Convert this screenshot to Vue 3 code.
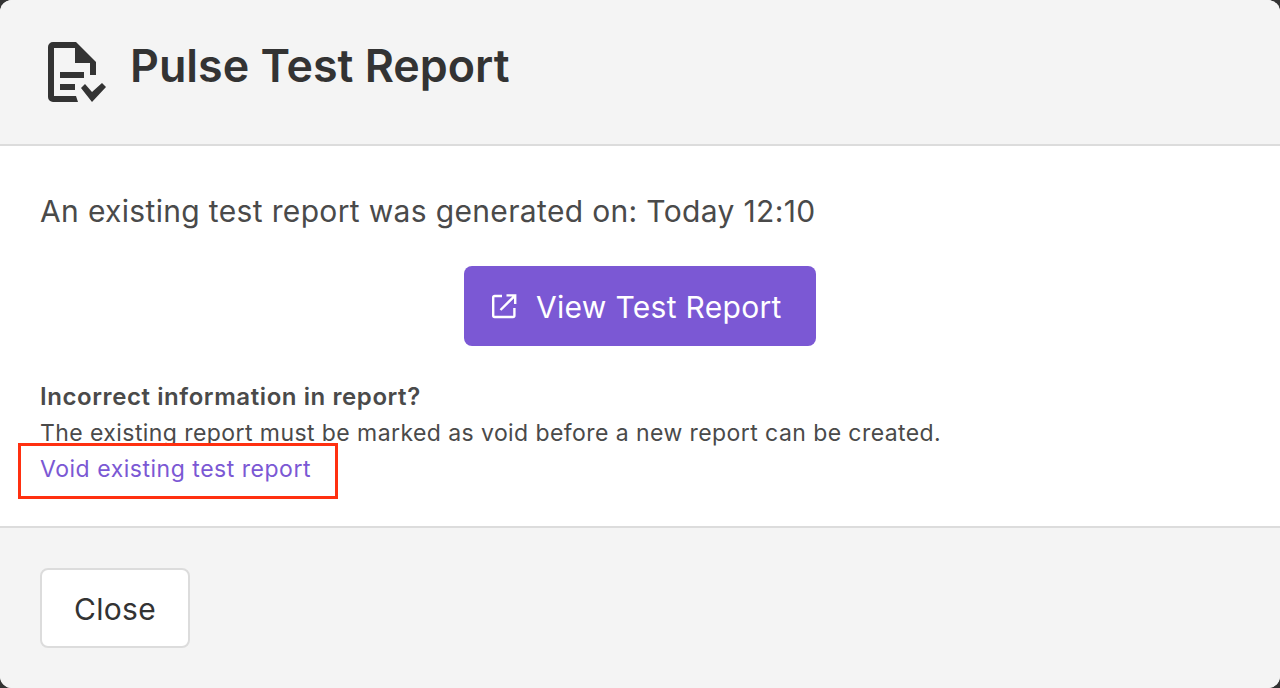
<template>
  <div class="modal">
    <header class="head">
      <svg class="report-icon" width="58" height="60" viewBox="48 42 58 60">
        <path fill="#333" d="M53 42H76L96 62V75H90V63H75V48H54V96H76L78 102H53a5 5 0 0 1-5-5V47a5 5 0 0 1 5-5Z" />
        <path fill="#333" d="M60 72H84V78H60ZM60 84H75V90H60Z" />
        <path fill="#333" d="M81 88L85 84L92 92L102 83L106 87L92 102Z" />
      </svg>
      <h1 class="title">Pulse Test Report</h1>
    </header>
    <main class="body">
      <p class="existing">An existing test report was generated on: Today 12:10</p>
      <div class="action">
        <button class="primary">
          <svg width="26" height="26" viewBox="0 0 26 26" fill="none" stroke="#fff" stroke-width="2.4">
            <path d="M11 3H3.6A1.4 1.4 0 0 0 2.2 4.4V22.6A1.4 1.4 0 0 0 3.6 24H22A1.4 1.4 0 0 0 23.4 22.6V15" />
            <path d="M15.5 2.4H24.2V11M24 2.6L9.5 17" />
          </svg>
          <span class="primary-label">View Test Report</span>
        </button>
      </div>
      <div class="info">
        <strong>Incorrect information in report?</strong>
        <div>The existing report must be marked as void before a new report can be created.</div>
        <div class="void-row">
          <a class="void-link">Void existing test report</a>
          <span class="highlight"></span>
        </div>
      </div>
    </main>
    <footer class="foot">
      <button class="close">Close</button>
    </footer>
  </div>
</template>

<script setup>
</script>

<style>
html, body { margin: 0; background: #333; }
</style>

<style scoped>
.modal {
  width: 1280px; height: 688px; box-sizing: border-box; overflow: hidden;
  display: flex; flex-direction: column;
  border-radius: 12px; background: #fff; color: #4a4a4a;
  font-family: Inter, "Liberation Sans", sans-serif;
}
.head {
  height: 146px; box-sizing: border-box; flex: none;
  display: flex; align-items: flex-start; gap: 24px;
  padding: 42px 0 0 48px;
  background: #f4f4f4; border-bottom: 2px solid #dcdcdc;
}
.report-icon { display: block; flex: none; }
.title {
  margin: -1px 0 0; font-size: 44.8px; line-height: 50px; font-weight: 600; color: #333;
}
.body { flex: 1; padding: 46px 40px 0 40px; }
.existing { margin: 0; font-size: 30px; line-height: 38px; letter-spacing: .34px; color: #4a4a4a; }
.action { display: flex; justify-content: center; margin-top: 36px; }
.primary {
  width: 352px; height: 80px; display: flex; align-items: center; gap: 19px;
  padding: 0 0 0 27px;
  border: 0; border-radius: 8px; background: #7b58d4; color: #fff;
  font: 400 30px Inter, "Liberation Sans", sans-serif; letter-spacing: .3px;
}
.primary-label { padding-top: 2px; }
.info { margin-top: 33px; font-size: 23px; line-height: 36px; letter-spacing: .425px; }
.info strong { font-weight: 600; display: block; font-size: 24px; letter-spacing: .58px; }
.void-row { position: relative; }
.void-link { color: #7b58d4; letter-spacing: .52px; }
.highlight {
  position: absolute; left: -22px; top: -8px; width: 320px; height: 56px;
  box-sizing: border-box; border: 3.5px solid #ff3010;
}
.foot {
  height: 162px; box-sizing: border-box; flex: none;
  padding: 40px 0 0 40px;
  background: #f4f4f4; border-top: 2px solid #dcdcdc;
}
.close {
  width: 150px; height: 80px; display: block; padding: 2px 0 0;
  background: #fff; border: 2px solid #dcdcdc; border-radius: 8px; color: #333;
  font: 400 30px Inter, "Liberation Sans", sans-serif; letter-spacing: .3px;
}
</style>
